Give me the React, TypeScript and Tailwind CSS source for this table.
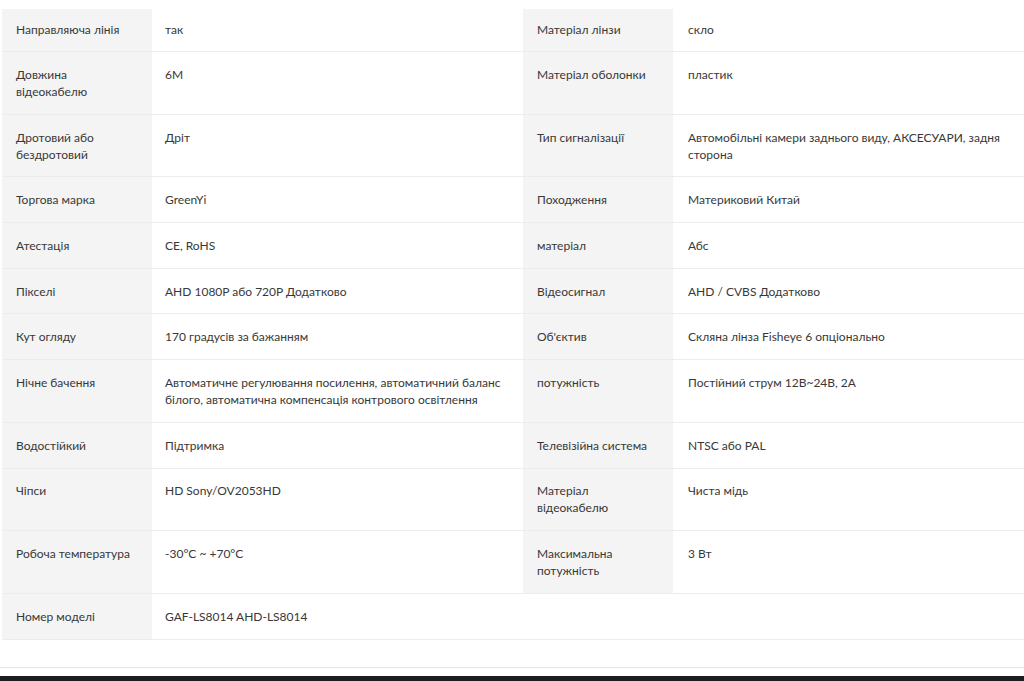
import React from "react";

const rows: [string, string, string, string][] = [
  ["Направляюча лінія", "так", "Матеріал лінзи", "скло"],
  ["Довжина відеокабелю", "6M", "Матеріал оболонки", "пластик"],
  ["Дротовий або бездротовий", "Дріт", "Тип сигналізації", "Автомобільні камери заднього виду, АКСЕСУАРИ, задня сторона"],
  ["Торгова марка", "GreenYi", "Походження", "Материковий Китай"],
  ["Атестація", "CE, RoHS", "матеріал", "Абс"],
  ["Пікселі", "AHD 1080P або 720P Додатково", "Відеосигнал", "AHD / CVBS Додатково"],
  ["Кут огляду", "170 градусів за бажанням", "Об'єктив", "Скляна лінза Fisheye 6 опціонально"],
  ["Нічне бачення", "Автоматичне регулювання посилення, автоматичний баланс білого, автоматична компенсація контрового освітлення", "потужність", "Постійний струм 12В~24В, 2А"],
  ["Водостійкий", "Підтримка", "Телевізійна система", "NTSC або PAL"],
  ["Чіпси", "HD Sony/OV2053HD", "Матеріал відеокабелю", "Чиста мідь"],
  ["Робоча температура", "-30°C ~ +70°C", "Максимальна потужність", "3 Вт"],
  ["Номер моделі", "GAF-LS8014 AHD-LS8014", "", ""],
];

export default function App() {
  return (
    <div
      className="w-[1024px] h-[681px] bg-white overflow-hidden flex flex-col text-[12px] leading-[17px] text-[#383838]"
      style={{ fontFamily: "Lato, 'Noto Sans', sans-serif" }}
    >
      <div className="pt-[9px] pl-[2px]">
        {rows.map((r, i) => {
          const pad = i === 0 ? "pt-[12px] pb-[13px]" : "pt-[13.85px] pb-[13.85px]";
          const last = r[2] === "";
          return (
            <div key={i} className="flex border-b border-[#ececec]">
              <div className={`w-[150px] shrink-0 bg-[#f4f4f4] pl-[14px] pr-[20px] ${pad}`}>{r[0]}</div>
              <div className={`w-[371px] shrink-0 pl-[13px] pr-[12px] ${pad}`}>{r[1]}</div>
              <div className={`w-[150px] shrink-0 pl-[14px] pr-[20px] ${last ? "" : "bg-[#f4f4f4]"} ${pad}`}>{r[2]}</div>
              <div className={`flex-1 pl-[15px] pr-[16px] ${pad}`}>{r[3]}</div>
            </div>
          );
        })}
      </div>
      <div className="h-[27px] shrink-0" />
      <div className="h-[1px] bg-[#e6e6e6] shrink-0" />
      <div className="flex-1" />
      <div className="h-[5px] bg-[#1c1c1c] shrink-0" />
    </div>
  );
}
